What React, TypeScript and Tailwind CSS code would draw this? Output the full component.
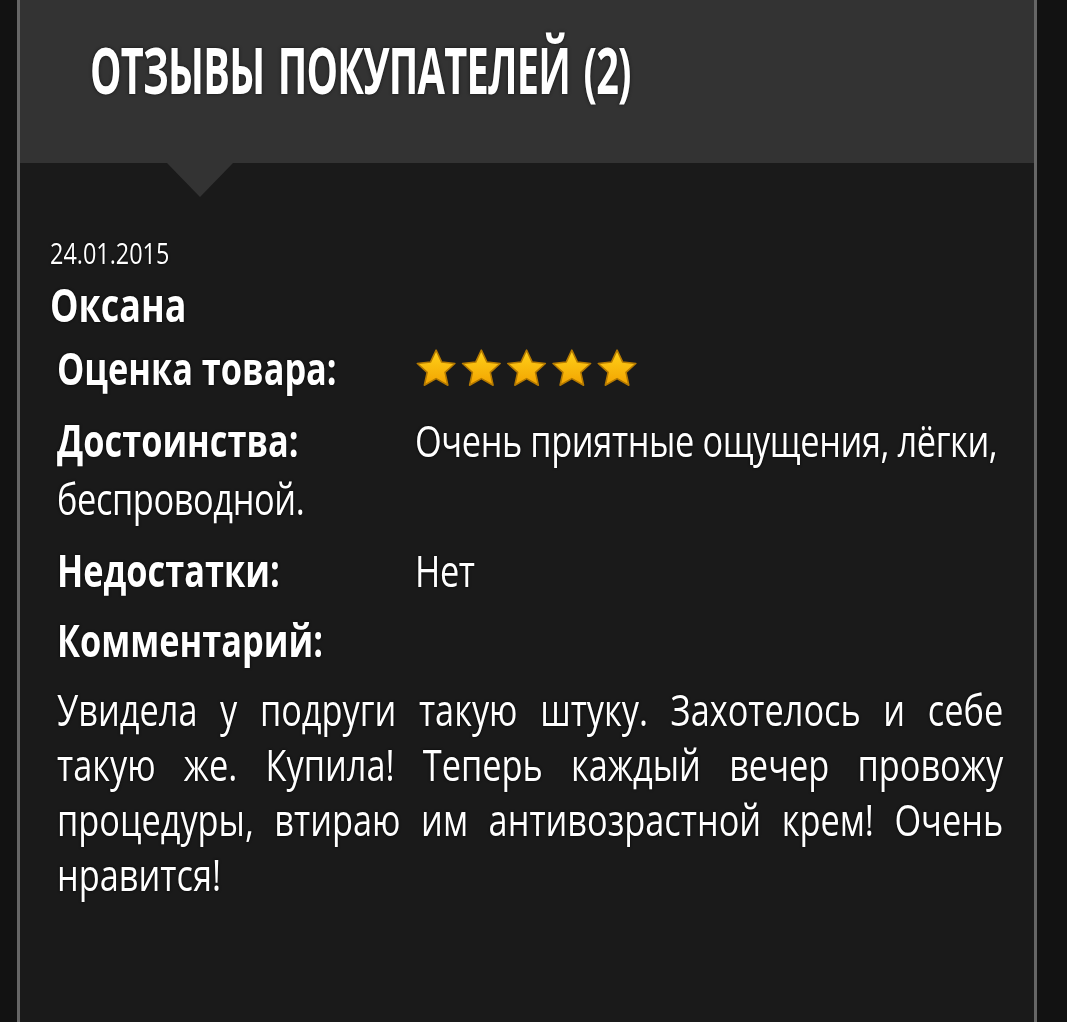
import React from 'react'

// Open Sans squeezed horizontally stands in for the narrow fonts of the reference
const font = '[font-family:"Open_Sans","DejaVu_Sans",sans-serif]'

function Star() {
  return (
    <svg width="54" height="40" viewBox="0 0 24 23" preserveAspectRatio="none" className="block">
      <defs>
        <linearGradient id="starFill" x1="0" y1="0" x2="0" y2="1">
          <stop offset="0" stopColor="#ffd21a" />
          <stop offset="1" stopColor="#f2a300" />
        </linearGradient>
      </defs>
      <path
        d="M12 1.2l3.2 6.9 7.5.8-5.6 5.1 1.6 7.4L12 17.6l-6.7 3.8 1.6-7.4-5.6-5.1 7.5-.8z"
        fill="url(#starFill)"
        stroke="#b57a00"
        strokeWidth="0.9"
        strokeLinejoin="round"
      />
    </svg>
  )
}

function Rivet({ side, top }: { side: 'left' | 'right'; top: string }) {
  return (
    <span
      className={`absolute h-[8px] w-[4px] rounded-full bg-white/90 blur-[0.5px] ${top} ${
        side === 'left' ? 'left-[-3px]' : 'right-[-3px]'
      }`}
    />
  )
}

export default function App() {
  return (
    <div className={`min-h-[1022px] w-full bg-[#121212] pl-[17px] ${font}`}>
      <div className="relative h-[1022px] w-[1020px] overflow-hidden border-x-[3px] border-[#666666] bg-[#1a1a1a]">
        <Rivet side="left" top="top-[54px]" />
        <Rivet side="left" top="top-[89px]" />
        <Rivet side="right" top="top-[54px]" />
        <Rivet side="right" top="top-[89px]" />

        <header className="relative h-[163px] bg-[#333333] pt-[26px] pl-[70px]">
          <h2 className="origin-left scale-x-[0.62] text-[64px] leading-[88px] font-bold tracking-[-1.2px] whitespace-nowrap text-white uppercase [word-spacing:6px] [text-shadow:0_0_4px_#111]">
            Отзывы покупателей (2)
          </h2>
          <span className="absolute top-full left-[147px] h-0 w-0 border-x-[33px] border-t-[34px] border-x-transparent border-t-[#333333]" />
        </header>

        <div className="pt-[71px] pl-[30px]">
          <div className="w-[1222px] origin-left scale-x-[0.78] text-white [text-shadow:0_0_3px_#000]">
            <div className="text-[30px] leading-[38px]">24.01.2015</div>
            <div className="mt-[6px] text-[46px] leading-[52px] font-bold">Оксана</div>

            <div className="mt-[9px] pl-[9px] text-[44px] leading-[58px] tracking-[-0.5px]">
              <div className="mb-[14px] flex h-[58px] items-center">
                <span className="w-[459px] font-bold tracking-normal">Оценка товара:</span>
                <span className="flex gap-[4px]">
                  <Star />
                  <Star />
                  <Star />
                  <Star />
                  <Star />
                </span>
              </div>
              <p className="mb-[14px]">
                <span className="inline-block w-[459px] font-bold tracking-normal">Достоинства:</span>
                Очень приятные ощущения, лёгки, беспроводной.
              </p>
              <p className="mb-[12px]">
                <span className="inline-block w-[459px] font-bold tracking-normal">Недостатки:</span>
                Нет
              </p>
              <p className="mb-[13px] font-bold tracking-normal">Комментарий:</p>
              <p className="text-justify leading-[55px] tracking-normal [text-align-last:justify]">
                Увидела у подруги такую штуку. Захотелось и себе
                <br />
                такую же. Купила! Теперь каждый вечер провожу
                <br />
                процедуры, втираю им антивозрастной крем! Очень
                <br />
                нравится!
              </p>
            </div>
          </div>
        </div>
      </div>
    </div>
  )
}
